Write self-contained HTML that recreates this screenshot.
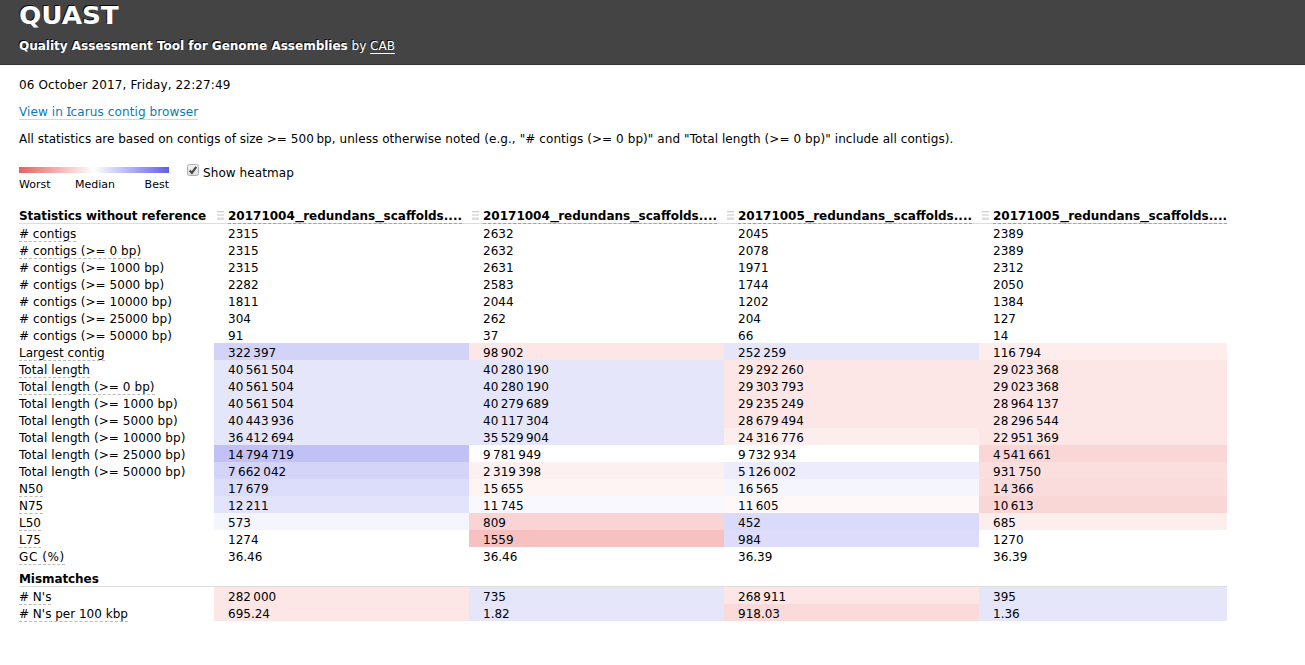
<!DOCTYPE html>
<html>
<head>
<meta charset="utf-8">
<title>QUAST</title>
<style>
html, body { margin: 0; padding: 0; }
body {
  font-family: "DejaVu Sans", "Liberation Sans", sans-serif;
  font-size: 13px;
  color: #000;
  background: #fff;
  width: 1305px;
  height: 665px;
  overflow: hidden;
  position: relative;
}
.top {
  position: absolute; left: 0; top: 0; width: 1305px; height: 64px;
  background: #444; color: #fff; border-bottom: 1px solid #333;
  text-shadow: -1px -1px 0 rgba(0,0,0,0.85);
}
.top h1 {
  position: absolute; left: 19px; top: -3px; margin: 0;
  font-size: 25.4px; line-height: 36px; font-weight: bold;
  transform: scaleX(1.03); transform-origin: 0 0;
}
.top .sub {
  position: absolute; left: 19px; top: 38px; line-height: 16px; font-size: 12px; white-space: nowrap;
}
.top .sub b { font-weight: bold; }
.top .sub a { color: #fff; text-decoration: none; border-bottom: 1px solid #fff; }
.line { position: absolute; left: 19px; white-space: nowrap; line-height: 16px; font-size: 12px; }
a.lnk { color: #0b7bb5; text-decoration: none; border-bottom: 1px solid #cbdae5; }
span.I { position: relative; }
span.I::before, span.I::after { content: ""; position: absolute; left: -0.1px; width: 3.9px; height: 1px; background: currentColor; opacity: 0.85; }
span.I::before { top: 1.5px; }
span.I::after { top: 10.3px; }
.grad {
  position: absolute; left: 19px; top: 167px; width: 150px; height: 6px;
  background: linear-gradient(to right, #ed5e5e 0%, #ffffff 50%, #5e5eed 100%);
}
.leg { position: absolute; top: 178px; font-size: 11px; line-height: 14px; }
.cb {
  position: absolute; left: 187px; top: 164px; width: 10px; height: 10px;
  border: 1px solid #adadad; border-radius: 2.5px;
  background: linear-gradient(to bottom, #f2f2f2, #e2e2e2);
}
.cb svg { position: absolute; left: -1px; top: -1px; width: 12px; height: 12px; }
table {
  position: absolute; left: 19px; top: 207px;
  border-collapse: separate; border-spacing: 0;
  font-size: 12px;
}
td, th { padding: 4px 0 0 0; height: 13px; line-height: 13px; text-align: left; white-space: nowrap; font-weight: normal; }
th { font-weight: bold; }
th.l { letter-spacing: -0.075px; }
tr.h th { padding-top: 2px; height: 14px; line-height: 14px; border-bottom: 1px solid #ddd; position: relative; }
td.l, th.l { width: 195px; }
td.v, th.v { width: 241px; padding-left: 14px; }
td.v:last-child, th.v:last-child { width: 234px; }
th.v span.n { display: inline-block; vertical-align: top; height: 14px; border-bottom: 1px dashed #a2a2a2; margin-bottom: -1px; position: relative; }
th.v u { text-decoration: none; display: inline-block; width: 8.35px; transform-origin: 0 75%; transform: translate(0.3px,-1.4px) scale(1.45, 1.2); }
th.v i { position: absolute; left: 3px; top: 4px; width: 7px; height: 9px;
  background: linear-gradient(to bottom, #d0d0d0 0, #d0d0d0 1px, #eee 1px, #eee 2px, #fff 2px, #fff 3px, #e2e2e2 3px, #e2e2e2 5px, #fff 5px, #fff 6px, #eee 6px, #eee 7px, #ddd 7px, #ddd 9px); }
span.d { border-bottom: 1px dashed #bbb; }
.b0 { background: #f3f3fd; }
.b1 { background: #e8e8fc; }
.b2 { background: #d6d6fa; }
.b3 { background: #c1c1f7; }
.r0 { background: #fdf3f3; }
.r1 { background: #fce8e8; }
.r2 { background: #fad6d6; }
.r3 { background: #f7c1c1; }
tr.g th { padding-top: 8px; height: 14px; line-height: 14px; border-bottom: 1px solid #ddd; }
</style>
</head>
<body>
<div class="top">
  <h1>QUAST</h1>
  <div class="sub"><b>Quality Assessment Tool for Genome Assemblies</b> by <a>CAB</a></div>
</div>
<div class="line" style="top:77px;letter-spacing:0.14px">06 October 2017, Friday, 22:27:49</div>
<div class="line" style="top:104px"><a class="lnk" style="letter-spacing:0.107px">View in <span class="I">I</span>carus contig browser</a></div>
<div class="line" style="top:131px">All statistics are based on contigs of size <span style="letter-spacing:0.06px">&gt;= 500&#8201;bp, unless otherwise noted </span><span style="letter-spacing:0.078px">(e.g., "# contigs (&gt;= 0 bp)" and "Total length (&gt;= 0 bp)" include all contigs).</span></div>
<div class="grad"></div>
<div class="leg" style="left:19px">Worst</div>
<div class="leg" style="left:75px">Median</div>
<div class="leg" style="left:144.6px">Best</div>
<div class="cb"><svg viewBox="0 0 12 12"><path d="M2.6 6.6 L4.9 8.9 L9.3 2.9" fill="none" stroke="#454545" stroke-width="2.1"/></svg></div>
<div class="line" style="top:165px;left:203px;letter-spacing:0.08px">Show heatmap</div>
<table>
<tr class="h"><th class="l">Statistics without reference</th><th class="v"><i></i><span class="n">20171004<u>_</u>redundans<u>_</u>scaffolds....</span></th><th class="v"><i></i><span class="n">20171004<u>_</u>redundans<u>_</u>scaffolds....</span></th><th class="v"><i></i><span class="n">20171005<u>_</u>redundans<u>_</u>scaffolds....</span></th><th class="v"><i></i><span class="n">20171005<u>_</u>redundans<u>_</u>scaffolds....</span></th></tr>
<tr><td class="l"><span class="d"># contigs</span></td><td class="v">2315</td><td class="v">2632</td><td class="v">2045</td><td class="v">2389</td></tr>
<tr><td class="l" style="letter-spacing:0.055px"><span class="d"># contigs (&gt;= 0 bp)</span></td><td class="v">2315</td><td class="v">2632</td><td class="v">2078</td><td class="v">2389</td></tr>
<tr><td class="l" style="letter-spacing:0.055px"># contigs (&gt;= 1000 bp)</td><td class="v">2315</td><td class="v">2631</td><td class="v">1971</td><td class="v">2312</td></tr>
<tr><td class="l" style="letter-spacing:0.055px"># contigs (&gt;= 5000 bp)</td><td class="v">2282</td><td class="v">2583</td><td class="v">1744</td><td class="v">2050</td></tr>
<tr><td class="l" style="letter-spacing:0.055px"># contigs (&gt;= 10000 bp)</td><td class="v">1811</td><td class="v">2044</td><td class="v">1202</td><td class="v">1384</td></tr>
<tr><td class="l" style="letter-spacing:0.055px"># contigs (&gt;= 25000 bp)</td><td class="v">304</td><td class="v">262</td><td class="v">204</td><td class="v">127</td></tr>
<tr><td class="l" style="letter-spacing:0.055px"># contigs (&gt;= 50000 bp)</td><td class="v">91</td><td class="v">37</td><td class="v">66</td><td class="v">14</td></tr>
<tr><td class="l"><span class="d">Largest contig</span></td><td class="v" style="background:#d3d3f9">322&#8201;397</td><td class="v" style="background:#fce6e6">98&#8201;902</td><td class="v" style="background:#e6e6fb">252&#8201;259</td><td class="v" style="background:#fdeded">116&#8201;794</td></tr>
<tr><td class="l" style="letter-spacing:0.08px"><span class="d">Total length</span></td><td class="v" style="background:#e6e6fb">40&#8201;561&#8201;504</td><td class="v" style="background:#e6e6fb">40&#8201;280&#8201;190</td><td class="v" style="background:#fce6e6">29&#8201;292&#8201;260</td><td class="v" style="background:#fce6e6">29&#8201;023&#8201;368</td></tr>
<tr><td class="l" style="letter-spacing:0.08px"><span class="d">Total length (&gt;= 0 bp)</span></td><td class="v" style="background:#e6e6fb">40&#8201;561&#8201;504</td><td class="v" style="background:#e6e6fb">40&#8201;280&#8201;190</td><td class="v" style="background:#fce6e6">29&#8201;303&#8201;793</td><td class="v" style="background:#fce6e6">29&#8201;023&#8201;368</td></tr>
<tr><td class="l" style="letter-spacing:0.08px">Total length (&gt;= 1000 bp)</td><td class="v" style="background:#e6e6fb">40&#8201;561&#8201;504</td><td class="v" style="background:#e6e6fb">40&#8201;279&#8201;689</td><td class="v" style="background:#fce6e6">29&#8201;235&#8201;249</td><td class="v" style="background:#fce6e6">28&#8201;964&#8201;137</td></tr>
<tr><td class="l" style="letter-spacing:0.08px">Total length (&gt;= 5000 bp)</td><td class="v" style="background:#e6e6fb">40&#8201;443&#8201;936</td><td class="v" style="background:#e6e6fb">40&#8201;117&#8201;304</td><td class="v" style="background:#fce6e6">28&#8201;679&#8201;494</td><td class="v" style="background:#fce6e6">28&#8201;296&#8201;544</td></tr>
<tr><td class="l" style="letter-spacing:0.08px">Total length (&gt;= 10000 bp)</td><td class="v" style="background:#e6e6fb">36&#8201;412&#8201;694</td><td class="v" style="background:#e6e6fb">35&#8201;529&#8201;904</td><td class="v" style="background:#fdeeee">24&#8201;316&#8201;776</td><td class="v" style="background:#fce6e6">22&#8201;951&#8201;369</td></tr>
<tr><td class="l" style="letter-spacing:0.08px">Total length (&gt;= 25000 bp)</td><td class="v" style="background:#c1c1f6">14&#8201;794&#8201;719</td><td class="v">9&#8201;781&#8201;949</td><td class="v">9&#8201;732&#8201;934</td><td class="v" style="background:#fad6d6">4&#8201;541&#8201;661</td></tr>
<tr><td class="l" style="letter-spacing:0.08px">Total length (&gt;= 50000 bp)</td><td class="v" style="background:#d4d4f9">7&#8201;662&#8201;042</td><td class="v" style="background:#fdf0f0">2&#8201;319&#8201;398</td><td class="v" style="background:#ececfd">5&#8201;126&#8201;002</td><td class="v" style="background:#fbdfdf">931&#8201;750</td></tr>
<tr><td class="l"><span class="d">N50</span></td><td class="v" style="background:#dcdcfb">17&#8201;679</td><td class="v" style="background:#fef4f4">15&#8201;655</td><td class="v" style="background:#f5f5fe">16&#8201;565</td><td class="v" style="background:#fbdcdc">14&#8201;366</td></tr>
<tr><td class="l"><span class="d">N75</span></td><td class="v" style="background:#e3e3fb">12&#8201;211</td><td class="v" style="background:#f8f8fe">11&#8201;745</td><td class="v" style="background:#fef8f8">11&#8201;605</td><td class="v" style="background:#fad7d7">10&#8201;613</td></tr>
<tr><td class="l"><span class="d">L50</span></td><td class="v" style="background:#f5f5fe">573</td><td class="v" style="background:#fad4d4">809</td><td class="v" style="background:#dadafa">452</td><td class="v" style="background:#fdeeee">685</td></tr>
<tr><td class="l"><span class="d">L75</span></td><td class="v">1274</td><td class="v" style="background:#f7c1c1">1559</td><td class="v" style="background:#ddddfb">984</td><td class="v">1270</td></tr>
<tr><td class="l" style="letter-spacing:0.6px"><span class="d">GC (%)</span></td><td class="v">36.46</td><td class="v">36.46</td><td class="v">36.39</td><td class="v">36.39</td></tr>
<tr class="g"><th class="l" colspan="5">Mismatches</th></tr>
<tr><td class="l"><span class="d"># N's</span></td><td class="v" style="background:#fce6e6">282&#8201;000</td><td class="v" style="background:#e6e6fb">735</td><td class="v" style="background:#fce6e6">268&#8201;911</td><td class="v" style="background:#e6e6fb">395</td></tr>
<tr><td class="l"><span class="d"># N's per 100 kbp</span></td><td class="v" style="background:#fce6e6">695.24</td><td class="v" style="background:#e6e6fb">1.82</td><td class="v" style="background:#fbdada">918.03</td><td class="v" style="background:#e6e6fb">1.36</td></tr>
</table>
</body>
</html>
